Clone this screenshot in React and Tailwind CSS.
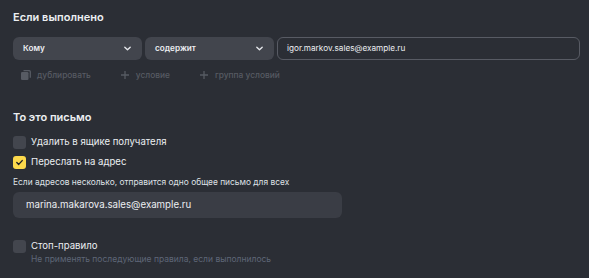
import React from 'react';

const font = { fontFamily: 'Inter, "Noto Sans", sans-serif' };

function Chevron() {
  return (
    <svg width="9" height="9" viewBox="0 0 10 10" className="text-gray-200">
      <path d="M2 3.5 L5 6.5 L8 3.5" fill="none" stroke="currentColor" strokeWidth="1.5" strokeLinecap="round" strokeLinejoin="round" />
    </svg>
  );
}

function Plus() {
  return (
    <svg width="8" height="8" viewBox="0 0 8 8" className="text-[#575b63]">
      <path d="M4 0 V8 M0 4 H8" stroke="currentColor" strokeWidth="1.3" />
    </svg>
  );
}

function CopyIcon() {
  return (
    <svg width="10" height="10" viewBox="0 0 10 10" className="text-[#575b63]">
      <rect x="0" y="2" width="7.5" height="8" rx="1.2" fill="currentColor" />
      <path d="M2.5 0.7 H8.3 a1 1 0 0 1 1 1 V7.8" fill="none" stroke="currentColor" strokeWidth="1.3" />
    </svg>
  );
}

function Checkbox({ checked }) {
  return checked ? (
    <div className="w-[13px] h-[13px] rounded-[3px] bg-[#fcd94c] flex items-center justify-center flex-shrink-0">
      <svg width="9" height="9" viewBox="0 0 9 9">
        <path d="M1.8 4.6 L3.7 6.4 L7.2 2.6" fill="none" stroke="#1f2126" strokeWidth="1.4" strokeLinecap="round" strokeLinejoin="round" />
      </svg>
    </div>
  ) : (
    <div className="w-[13px] h-[13px] rounded-[3px] bg-[#43464e] flex-shrink-0" />
  );
}

export default function App() {
  return (
    <div className="w-[589px] h-[278px] bg-[#2b2e35] text-[#eceef2] px-[13px] pt-[9px] overflow-hidden" style={font}>
      <h2 className="text-[11px] font-semibold leading-[16px]">Если выполнено</h2>

      <div className="flex gap-[3px] mt-[12px] h-[23px]">
        <div className="w-[129px] rounded-[6px] bg-[#42454d] flex items-center justify-between pl-[10px] pr-[10px]">
          <span className="text-[8.2px] font-semibold">Кому</span>
          <Chevron />
        </div>
        <div className="w-[129px] rounded-[6px] bg-[#42454d] flex items-center justify-between pl-[10px] pr-[10px]">
          <span className="text-[8.2px] font-semibold">содержит</span>
          <Chevron />
        </div>
        <div className="flex-1 mr-[-4px] rounded-[6px] border border-[#585b64] flex items-center pl-[9px]">
          <span className="text-[8.2px]">igor.markov.sales@example.ru</span>
        </div>
      </div>

      <div className="flex items-center mt-[8px] h-[14px] text-[8.4px] text-[#575b63] font-medium">
        <div className="flex items-center gap-[6px] pl-[8px]">
          <CopyIcon />
          <span>дублировать</span>
        </div>
        <div className="flex items-center gap-[7px] ml-[30px]">
          <Plus />
          <span>условие</span>
        </div>
        <div className="flex items-center gap-[7px] ml-[30px]">
          <Plus />
          <span>группа условий</span>
        </div>
      </div>

      <h2 className="text-[11px] font-semibold leading-[16px] mt-[27px]">То это письмо</h2>

      <div className="flex items-center gap-[5px] mt-[11px] h-[13px]">
        <Checkbox />
        <span className="text-[9.6px]">Удалить в ящике получателя</span>
      </div>
      <div className="flex items-center gap-[5px] mt-[7px] h-[13px]">
        <Checkbox checked />
        <span className="text-[9.6px]">Переслать на адрес</span>
      </div>
      <p className="text-[8.4px] leading-[13px] mt-[7px] text-[#dfe1e6]">
        Если адресов несколько, отправится одно общее письмо для всех
      </p>

      <div className="w-[329px] h-[26px] mt-[3px] rounded-[6px] bg-[#3a3d45] flex items-center pl-[13px]">
        <span className="text-[9.7px]">marina.makarova.sales@example.ru</span>
      </div>

      <div className="flex items-center gap-[5px] mt-[22px] h-[13px]">
        <Checkbox />
        <span className="text-[9.6px]">Стоп-правило</span>
      </div>
      <p className="text-[8.5px] leading-[12px] pl-[18px] text-[#5e6677]">
        Не применять последующие правила, если выполнилось
      </p>
    </div>
  );
}
